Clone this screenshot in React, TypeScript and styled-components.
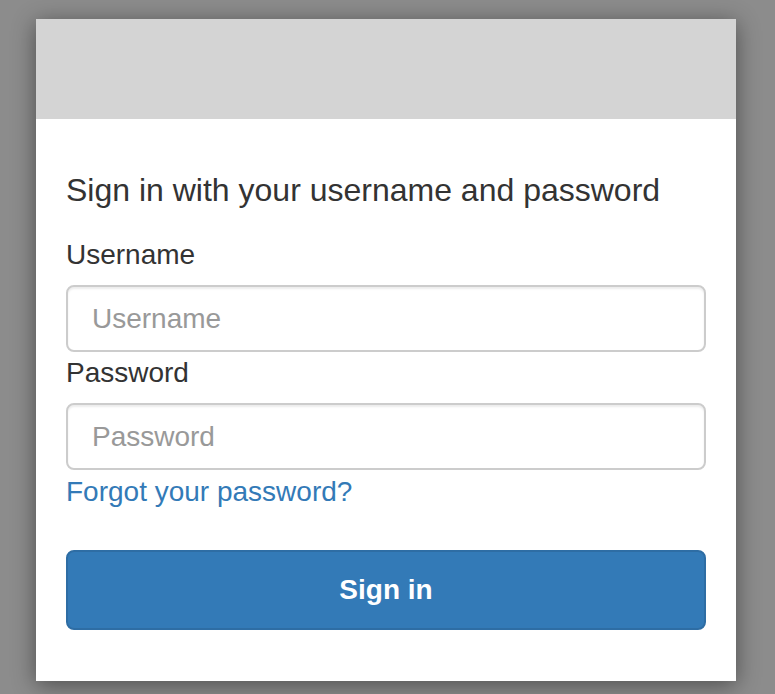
import * as React from 'react';
import styled, { createGlobalStyle } from 'styled-components';

const GlobalStyle = createGlobalStyle`
  html, body {
    margin: 0;
    padding: 0;
    background: #8c8c8c;
    font-family: "Liberation Sans", Arial, sans-serif;
    color: #333333;
  }
  * {
    box-sizing: border-box;
  }
`;

const Page = styled.div`
  min-height: 694px;
  padding: 19px 0 0 36px;
`;

const Card = styled.div`
  width: 700px;
  height: 662px;
  background: #ffffff;
  box-shadow: 0 4px 22px rgba(0, 0, 0, 0.45);
  display: flex;
  flex-direction: column;
`;

const Banner = styled.div`
  height: 100px;
  background: #d4d4d4;
`;

const Body = styled.form`
  padding: 48px 30px 0 30px;
  display: flex;
  flex-direction: column;
`;

const Title = styled.div`
  font-size: 32px;
  line-height: 46px;
  margin: 0 0 22px;
`;

const Label = styled.label`
  display: block;
  font-size: 28px;
  line-height: 40px;
  margin-bottom: 10px;
`;

const Input = styled.input`
  display: block;
  width: 100%;
  height: 67px;
  padding: 0 24px;
  font-family: "Liberation Sans", Arial, sans-serif;
  font-size: 28px;
  color: #555555;
  background: #ffffff;
  border: 2px solid #cccccc;
  border-radius: 8px;
  box-shadow: inset 0 2px 2px rgba(0, 0, 0, 0.075);
  outline: none;
  margin-bottom: 1px;

  &::placeholder {
    color: #999999;
  }
`;

const ForgotLink = styled.a`
  display: block;
  font-size: 28px;
  line-height: 40px;
  color: #337ab7;
  text-decoration: none;
  margin-top: 1px;
`;

const SubmitButton = styled.button`
  margin-top: 38px;
  width: 100%;
  height: 80px;
  background: #337ab7;
  border: 2px solid #2e6da4;
  border-radius: 8px;
  color: #ffffff;
  font-family: "Liberation Sans", Arial, sans-serif;
  font-size: 28px;
  font-weight: bold;
  cursor: pointer;
`;

const App = () => (
  <Page>
    <GlobalStyle />
    <Card>
      <Banner />
      <Body onSubmit={e => e.preventDefault()}>
        <Title>Sign in with your username and password</Title>
        <Label htmlFor="username">Username</Label>
        <Input id="username" type="text" placeholder="Username" />
        <Label htmlFor="password">Password</Label>
        <Input id="password" type="password" placeholder="Password" />
        <ForgotLink href="#">Forgot your password?</ForgotLink>
        <SubmitButton type="submit">Sign in</SubmitButton>
      </Body>
    </Card>
  </Page>
);

export default App;
